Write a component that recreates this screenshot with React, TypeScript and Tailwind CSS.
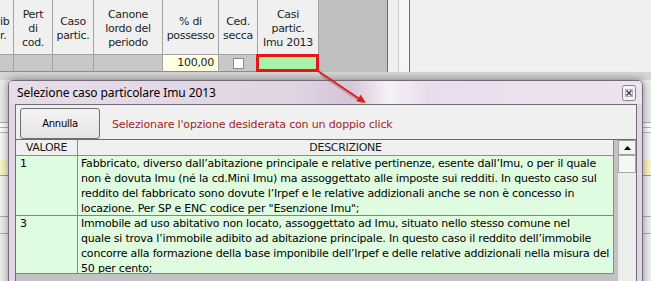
const headerCols = [
  { w: "w-[14px]", lines: ["ib", "r."], clip: true },
  { w: "w-[39px]", lines: ["Pert", "di", "cod."] },
  { w: "w-[41px]", lines: ["Caso", "partic."] },
  { w: "w-[69px]", lines: ["Canone", "lordo del", "periodo"] },
  { w: "w-[56px]", lines: ["% di", "possesso"] },
  { w: "w-[39px]", lines: ["Ced.", "secca"] },
  { w: "w-[61px]", lines: ["Casi", "partic.", "Imu 2013"] },
];

const rows = [
  {
    value: "1",
    h: "h-[60px]",
    lines: [
      "Fabbricato, diverso dall’abitazione principale e relative pertinenze, esente dall’Imu, o per il quale",
      "non è dovuta Imu (né la cd.Mini Imu) ma assoggettato alle imposte sui redditi. In questo caso sul",
      "reddito del fabbricato sono dovute l’Irpef e le relative addizionali anche se non è concesso in",
      "locazione. Per SP e ENC codice per \"Esenzione Imu\";",
    ],
  },
  {
    value: "3",
    h: "h-[58px]",
    lines: [
      "Immobile ad uso abitativo non locato, assoggettato ad Imu, situato nello stesso comune nel",
      "quale si trova l’immobile adibito ad abitazione principale. In questo caso il reddito dell’immobile",
      "concorre alla formazione della base imponibile dell’Irpef e delle relative addizionali nella misura del",
      "50 per cento;",
    ],
  },
];

function DataCell({ i }: { i: number }) {
  if (i === 4)
    return <div className="h-full bg-[#ffffe1] pr-[4px] text-right leading-[16px]">100,00</div>;
  if (i === 5)
    return (
      <div className="flex h-full items-center justify-center">
        <div className="h-[11px] w-[11px] border border-[#8a8a8a] bg-white" />
      </div>
    );
  if (i === 6)
    return <div className="-ml-[2px] -mt-[1px] h-[18px] w-[63px] border-[3px] border-[#e3161c] bg-[#a6f2a6]" />;
  return null;
}

function BackGrid() {
  return (
    <div className="flex h-[72px]">
      {headerCols.map((c, i) => (
        <div key={i} className={`${c.w} flex shrink-0 flex-col border-r border-[#a3a3a3]`}>
          <div
            className={`flex h-[55px] items-center border-b border-[#a3a3a3] bg-[#f0f0f0] pt-[3px] leading-[14px] ${
              c.clip ? "justify-start" : "justify-center"
            }`}
          >
            <div className={`whitespace-nowrap ${c.clip ? "text-left" : "text-center"}`}>
              {c.lines.map((l) => (
                <div key={l}>{l}</div>
              ))}
            </div>
          </div>
          <div className="h-[17px] border-b border-[#8e8e8e] bg-[#c8c8c8]">
            <DataCell i={i} />
          </div>
        </div>
      ))}
      <div className="w-[69px] shrink-0 border-r border-[#6b6b6b] bg-[#c0c0c0]" />
      <div className="w-[11px] shrink-0 border-r border-[#cdcdcd] bg-[#f0f0f0]" />
      <div className="w-[11px] shrink-0 border-r border-[#6e6e6e] bg-[#f5f5f5]" />
      <div className="flex-1 bg-[#f0f0f0]" />
    </div>
  );
}

function CloseBox() {
  return (
    <svg width="14" height="16" viewBox="0 0 14 16">
      <rect x="0.5" y="0.5" width="13" height="15" rx="2" fill="#f7f3f8" stroke="#8a7f8e" />
      <rect x="3.5" y="4.5" width="7" height="7" fill="none" stroke="#b5adb8" />
      <path d="M4.5 5.5 L9.5 10.5 M9.5 5.5 L4.5 10.5" stroke="#4b454e" strokeWidth="1.6" />
    </svg>
  );
}

function Dialog() {
  return (
    <div className="absolute left-[8px] top-[80px] flex h-[215px] w-[635px] flex-col rounded-t-[5px] border border-[#736a78] bg-[#e2d6e6] shadow-[0_0_10px_rgba(0,0,0,0.45)]">
      <div className="flex h-[23px] items-center justify-between rounded-t-[4px] bg-[linear-gradient(90deg,#e7dde9_0%,#e0d4e3_45%,#d6c6d8_54%,#f6f1f7_60%,#e8dded_66%,#ece3ef_100%)] pl-[8px] pr-[6px]">
        <span className="font-['Noto_Sans',sans-serif] text-[12px] tracking-[-0.1px] text-black">
          Selezione caso particolare Imu 2013
        </span>
        <CloseBox />
      </div>
      <div className="ml-[6px] mr-[5px] flex flex-1 flex-col border border-[#6f6f78] bg-[#f0f0f0]">
        <div className="flex h-[34px] items-start pl-[4px] pt-[3px]">
          <button className="h-[31px] w-[80px] rounded-[3px] border border-[#707070] bg-[linear-gradient(#f3f3f3,#e4e4e4)] text-[10px] text-black">
            Annulla
          </button>
          <span className="ml-[12px] mt-[9px] text-[11px] leading-[15px] tracking-[-0.15px] text-[#a31f24]">
            Selezionare l'opzione desiderata con un doppio click
          </span>
        </div>
        <div className="flex flex-1 border-t border-[#6a6a6a] bg-[#c3c3c3]">
          <div className="flex flex-1 flex-col">
            <div className="flex h-[16px] w-[598px] border-b border-[#8c8c8c] bg-[#f0f0f0] leading-[15px] text-[#1a1a1a]">
              <div className="w-[62px] shrink-0 border-r border-[#8c8c8c] text-center">VALORE</div>
              <div className="w-[536px] shrink-0 border-r border-[#8c8c8c] text-center">DESCRIZIONE</div>
            </div>
            {rows.map((r) => (
              <div
                key={r.value}
                className={`flex ${r.h} w-[598px] overflow-hidden border-b border-[#7e8a7e] bg-[#e0fce0] leading-[15px] tracking-[-0.2px] text-black`}
              >
                <div className="w-[62px] shrink-0 border-r border-[#8c8c8c] px-[4px]">{r.value}</div>
                <div className="w-[536px] shrink-0 border-r border-[#8c8c8c] px-[3px]">
                  {r.lines.map((l) => (
                    <div key={l} className="whitespace-nowrap">
                      {l}
                    </div>
                  ))}
                </div>
              </div>
            ))}
          </div>
          <div className="flex w-[18px] shrink-0 flex-col bg-[#ededed]">
            <div className="flex h-[15px] items-center justify-center border border-[#a0a0a0] bg-[#f4f4f4]">
              <svg width="7" height="4" viewBox="0 0 7 4">
                <path d="M3.5 0 L7 4 L0 4 Z" fill="#000" />
              </svg>
            </div>
            <div className="h-[18px] border border-[#a8a8a8] bg-[#f6f6f6]" />
          </div>
        </div>
      </div>
    </div>
  );
}

export default function App() {
  return (
    <div className="relative h-[281px] w-[651px] overflow-hidden bg-[#f0f0f0] font-['DejaVu_Sans',Verdana,sans-serif] text-[11px] tracking-[-0.3px] text-[#1e1e1e]">
      <div className="flex h-full flex-col">
        <BackGrid />
        <div className="flex flex-1 flex-col">
          <div className="h-[8px] bg-[#d6d6d6]" />
          <div className="h-[43px] border-b border-[#b0b0b0] bg-[#ececec]" />
          <div className="h-[5px] border-b border-[#b8b8b8] bg-white" />
          <div className="h-[5px] border-b border-[#b8b8b8] bg-white" />
          <div className="h-[27px] bg-[#f8f8f8]" />
          <div className="h-[16px] border-b border-[#a0a0a0] bg-[#fcf6c9]" />
          <div className="h-[41px] border-b border-[#b0b0b0] bg-[#f4f4f4]" />
          <div className="h-[17px] border-b border-[#b0b0b0] bg-[#f0f0f0]" />
          <div className="flex-1 bg-[#f0f0f0]" />
        </div>
      </div>
      <Dialog />
      <svg className="pointer-events-none absolute left-0 top-0" width="651" height="281">
        <line x1="319" y1="72" x2="362" y2="101" stroke="#5a3b3b" strokeOpacity="0.25" strokeWidth="3" transform="translate(1 2)" />
        <line x1="318" y1="71" x2="361" y2="100" stroke="#e21b1b" strokeWidth="2" />
        <polygon points="366,103 356.3,101.3 360.7,94.7" fill="#e21b1b" />
      </svg>
    </div>
  );
}
